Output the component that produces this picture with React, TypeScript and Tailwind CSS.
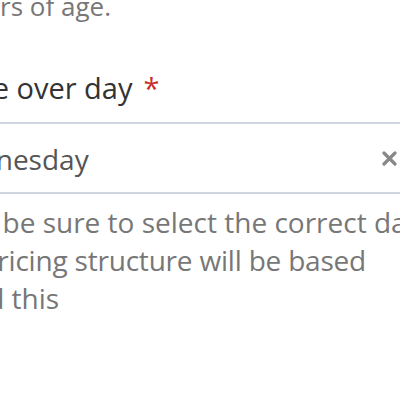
export default function App() {
  return (
    <div className="w-[400px] h-[400px] overflow-hidden bg-white font-['Open_Sans',sans-serif]">
      {/* hint from the previous field */}
      <p className="-mt-[13px] -ml-[42px] whitespace-nowrap text-[26px] leading-[38px] text-[#777]">
        years of age.
      </p>

      {/* change over day select */}
      <label className="mt-[43px] block -ml-[93px] whitespace-nowrap text-[29px] leading-[40px] text-[#333]">
        Change over day
        <span className="ml-[11px] text-[#c9302c]">*</span>
      </label>

      <div className="mt-[14px] -ml-[20px] flex h-[72px] w-[440px] items-center border-2 border-[#cfd6df] bg-white pr-[21px]">
        <span className="-ml-[45px] mt-[2px] flex-1 whitespace-nowrap text-[28px] leading-[38px] text-[#555]">
          Wednesday
        </span>
        <svg viewBox="0 0 15 15" className="h-[15px] w-[15px]" fill="none" stroke="#888" strokeWidth="3.2" strokeLinecap="round">
          <path d="M2 2 L13 13 M13 2 L2 13" />
        </svg>
      </div>

      {/* help text */}
      <div className="mt-[9px] whitespace-nowrap text-[28px] leading-[38px] text-[#777]">
        <p className="-ml-[89px]">Please be sure to select the correct day as</p>
        <p className="-ml-[69px] tracking-[-0.2px]">the pricing structure will be based</p>
        <p className="-ml-[91px]">around this</p>
      </div>
    </div>
  )
}
